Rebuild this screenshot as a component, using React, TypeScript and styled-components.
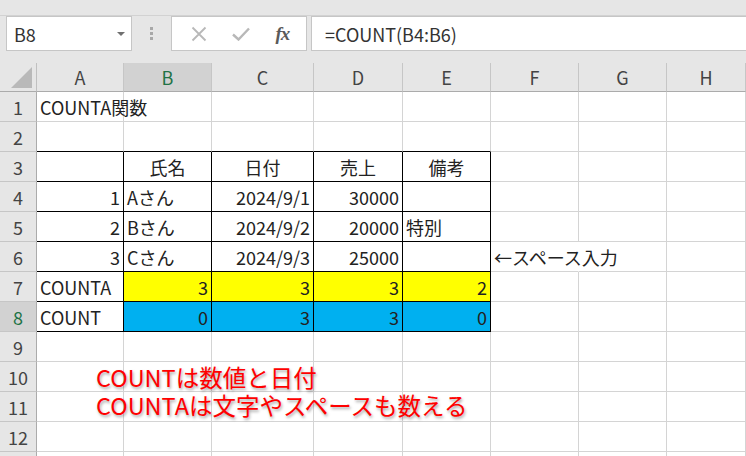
import styled, { createGlobalStyle } from "styled-components"

const GlobalStyle = createGlobalStyle`
  body {
    margin: 0;
    background: #ffffff;
    font-family: "Noto Sans CJK JP", "Noto Sans", sans-serif;
    overflow: hidden;
  }
`

const Page = styled.div`
  position: relative;
  width: 746px;
  height: 456px;
  overflow: hidden;
  background: #e6e6e6;
`

const TopStrip = styled.div`
  height: 15px;
  border-bottom: 1px solid #d2d2d2;
`

const FormulaRow = styled.div`
  display: flex;
  align-items: flex-start;
  height: 47px;
`

const NameBox = styled.div`
  box-sizing: border-box;
  display: flex;
  align-items: center;
  justify-content: space-between;
  width: 126px;
  height: 35px;
  margin-left: 6px;
  padding: 0 6px 0 7px;
  background: #fff;
  border: 1px solid #c6c6c6;
  font-size: 18px;
  color: #333;
`

const Caret = styled.span`
  width: 0;
  height: 0;
  border-left: 4px solid transparent;
  border-right: 4px solid transparent;
  border-top: 4px solid #707070;
`

const Grip = styled.div`
  display: flex;
  flex-direction: column;
  gap: 2px;
  width: 39px;
  align-items: center;
  padding-top: 11px;
  span {
    width: 3px;
    height: 3px;
    background: #a8a8a8;
  }
`

const FxBox = styled.div`
  box-sizing: border-box;
  display: flex;
  align-items: center;
  justify-content: space-around;
  width: 136px;
  height: 35px;
  padding: 0 4px 0 6px;
  background: #fff;
  border: 1px solid #c6c6c6;
`

const FxText = styled.i`
  font-family: "Liberation Serif", serif;
  font-weight: bold;
  font-size: 19px;
  color: #5a5a5a;
  letter-spacing: -1px;
`

const FormulaBar = styled.div`
  box-sizing: border-box;
  flex: 1;
  display: flex;
  align-items: center;
  height: 35px;
  margin-left: 4px;
  padding-left: 13px;
  background: #fff;
  border: 1px solid #c6c6c6;
  border-right: none;
  font-size: 18px;
  color: #333;
`

const Sheet = styled.div`
  display: grid;
  grid-template-columns: 37px 87px 88px 102px 89px 88px 88px 88px 1fr;
  grid-template-rows: 29px repeat(13, 30px);
  background: #fff;
`

const Corner = styled.div`
  position: relative;
  background: #e6e6e6;
  border-right: 1px solid #c0c0c0;
  border-bottom: 1px solid #ababab;
  &::after {
    content: "";
    position: absolute;
    right: 4px;
    bottom: 3px;
    border-left: 21px solid transparent;
    border-bottom: 21px solid #b9b9b9;
  }
`

const ColHead = styled.div<{ $active?: boolean }>`
  display: flex;
  align-items: center;
  justify-content: center;
  background: ${({ $active }) => ($active ? "#d2d2d2" : "#e6e6e6")};
  border-right: 1px solid #c6c6c6;
  border-bottom: 1px solid #ababab;
  color: ${({ $active }) => ($active ? "#217346" : "#444")};
  font-size: 18px;
`

const RowHead = styled.div<{ $active?: boolean }>`
  display: flex;
  align-items: center;
  justify-content: center;
  background: ${({ $active }) => ($active ? "#d2d2d2" : "#e6e6e6")};
  border-right: 1px solid #ababab;
  border-bottom: 1px solid #c6c6c6;
  color: ${({ $active }) => ($active ? "#217346" : "#444")};
  font-size: 18px;
`

type Align = "left" | "right" | "center"

interface CellProps {
  $align?: Align
  $fill?: string
  $boxR?: boolean
  $boxB?: boolean
  $noGridR?: boolean
}

const justify = { left: "flex-start", right: "flex-end", center: "center" }

const Cell = styled.div<CellProps>`
  display: flex;
  align-items: center;
  justify-content: ${({ $align }) => justify[$align || "left"]};
  padding: 0 3px 0 3px;
  min-width: 0;
  white-space: nowrap;
  background: ${({ $fill }) => $fill || "transparent"};
  border-right: 1px solid
    ${({ $boxR, $noGridR }) => ($boxR ? "#000" : $noGridR ? "transparent" : "#d4d4d4")};
  border-bottom: 1px solid ${({ $boxB }) => ($boxB ? "#000" : "#d4d4d4")};
  font-size: 18px;
  color: #222;
`

const Note = styled.div`
  position: absolute;
  left: 96px;
  top: 363px;
  font-size: 23.5px;
  line-height: 28px;
  color: #ff0000;
  text-shadow: 1px 2px 3px rgba(0, 0, 0, 0.35);
  white-space: nowrap;
`

const columns = ["A", "B", "C", "D", "E", "F", "G", "H"]

type CellDef = { text?: string; align?: Align }

const YELLOW = "#ffff00"
const BLUE = "#00b0f0"

const rows: CellDef[][] = [
  [{ text: "COUNTA関数" }],
  [],
  [{}, { text: "氏名", align: "center" }, { text: "日付", align: "center" }, { text: "売上", align: "center" }, { text: "備考", align: "center" }],
  [{ text: "1", align: "right" }, { text: "Aさん" }, { text: "2024/9/1", align: "right" }, { text: "30000", align: "right" }, {}],
  [{ text: "2", align: "right" }, { text: "Bさん" }, { text: "2024/9/2", align: "right" }, { text: "20000", align: "right" }, { text: "特別" }],
  [{ text: "3", align: "right" }, { text: "Cさん" }, { text: "2024/9/3", align: "right" }, { text: "25000", align: "right" }, {}, { text: "←スペース入力" }],
  [{ text: "COUNTA" }, { text: "3", align: "right" }, { text: "3", align: "right" }, { text: "3", align: "right" }, { text: "2", align: "right" }],
  [{ text: "COUNT" }, { text: "0", align: "right" }, { text: "3", align: "right" }, { text: "3", align: "right" }, { text: "0", align: "right" }],
]

export default function App() {
  const rowCount = 13
  return (
    <>
      <GlobalStyle />
      <Page>
        <TopStrip />
        <FormulaRow>
          <NameBox>
            B8
            <Caret />
          </NameBox>
          <Grip>
            <span />
            <span />
            <span />
          </Grip>
          <FxBox>
            <svg width="16" height="16" viewBox="0 0 16 16">
              <path d="M1.5 1.5 L14.5 14.5 M14.5 1.5 L1.5 14.5" stroke="#b8b8b8" strokeWidth="1.8" fill="none" />
            </svg>
            <svg width="18" height="14" viewBox="0 0 18 14">
              <path d="M1 7.5 L6.5 12.5 L17 1.5" stroke="#b8b8b8" strokeWidth="2.4" fill="none" />
            </svg>
            <FxText>fx</FxText>
          </FxBox>
          <FormulaBar>=COUNT(B4:B6)</FormulaBar>
        </FormulaRow>
        <Sheet>
          <Corner />
          {columns.map((c) => (
            <ColHead key={c} $active={c === "B"}>
              {c}
            </ColHead>
          ))}
          {Array.from({ length: rowCount }, (_, r) => {
            const rowNum = r + 1
            const defs = rows[r] || []
            const inTable = rowNum >= 3 && rowNum <= 8
            return [
              <RowHead key={`h${rowNum}`} $active={rowNum === 8}>
                {rowNum}
              </RowHead>,
              ...columns.map((_, c) => {
                const def = defs[c] || {}
                const tableCol = c <= 4
                let fill: string | undefined
                if (rowNum === 7 && c >= 1 && c <= 4) fill = YELLOW
                if (rowNum === 8 && c >= 1 && c <= 4) fill = BLUE
                return (
                  <Cell
                    key={`${rowNum}-${c}`}
                    $align={def.align}
                    $fill={fill}
                    $boxR={inTable && tableCol}
                    $boxB={(inTable || rowNum === 2) && tableCol}
                    $noGridR={rowNum === 6 && c === 5}
                  >
                    {def.text}
                  </Cell>
                )
              }),
            ]
          })}
        </Sheet>
        <Note>
          COUNTは数値と日付
          <br />
          COUNTAは文字やスペースも数える
        </Note>
      </Page>
    </>
  )
}
